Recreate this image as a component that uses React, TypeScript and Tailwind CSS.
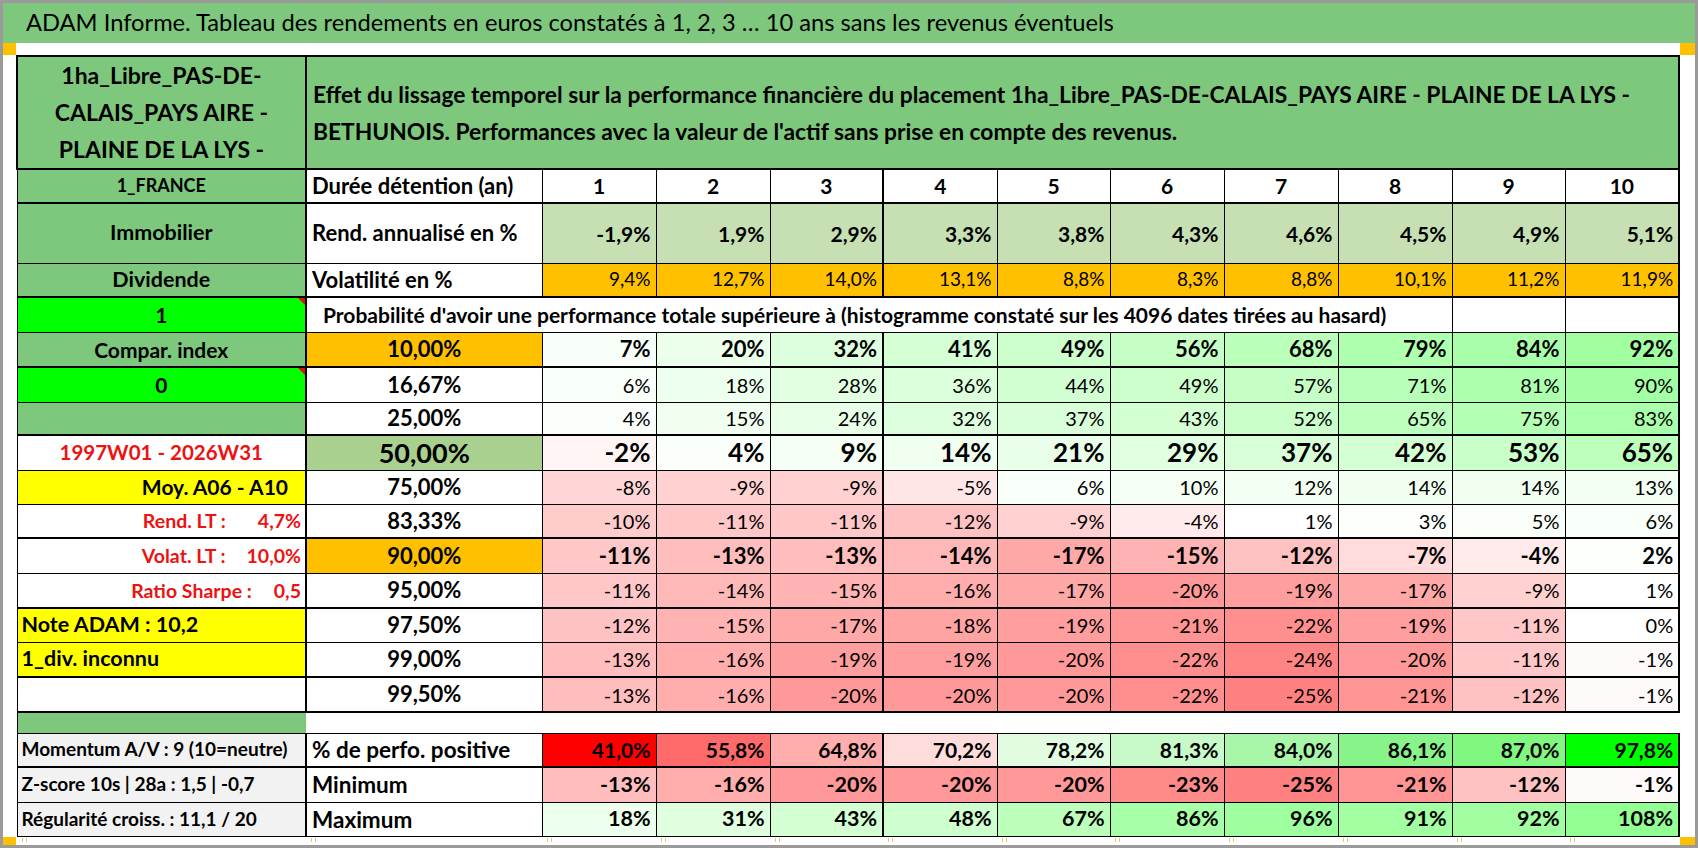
import React from 'react';

const colW = ['w-[114px]', 'w-[114px]', 'w-[113px]', 'w-[114px]', 'w-[113px]', 'w-[114px]', 'w-[114px]', 'w-[114px]', 'w-[113px]', 'w-[114px]'];

const rend = ['-1,9%', '1,9%', '2,9%', '3,3%', '3,8%', '4,3%', '4,6%', '4,5%', '4,9%', '5,1%'];
const vol = ['9,4%', '12,7%', '14,0%', '13,1%', '8,8%', '8,3%', '8,8%', '10,1%', '11,2%', '11,9%'];

const momentum = ['41,0%', '55,8%', '64,8%', '70,2%', '78,2%', '81,3%', '84,0%', '86,1%', '87,0%', '97,8%'];
const momentumBg = ['#ff0000', '#ff6b6b', '#ffadad', '#ffdcdc', '#e2fce2', '#c8f9c8', '#a8f6a8', '#88f388', '#80f880', '#00ff00'];
const minimum = [-13, -16, -20, -20, -20, -23, -25, -21, -12, -1];
const maximum = [18, 31, 43, 48, 67, 86, 96, 91, 92, 108];

// colour scale of the conditional formatting: white -> red below 0, white -> green above
function scaleBg(v: number) {
    if (v < 0) {
        const g = Math.round(255 * (1 - Math.min(1, -v / 50)));
        return `rgb(255,${g},${g})`;
    }
    const r = Math.round(255 * (1 - Math.min(1, v / 250)));
    return `rgb(${r},255,${r})`;
}

const GREEN = 'bg-[#7ec87e]';

function valCls(i: number, extra = '') {
    return `border border-black text-right pr-[5px] ${i === 2 ? 'border-r-2' : ''} ${i === 9 ? 'border-r-2' : ''} ${extra}`;
}

function Flag() {
    return <span className="absolute right-0 top-0 w-0 h-0 border-l-[7px] border-l-transparent border-t-[7px] border-t-[#e01010]" />;
}

function RedPair({ label, value, gap }: { label: string; value: string; gap: string }) {
    return (
        <div className="flex justify-end pr-[4px] text-[#ee1111] font-bold text-[19.5px]">
            <span>{label}</span>
            <span className={gap}>{value}</span>
        </div>
    );
}

type ProbRow = {
    label: string;
    vals: number[];
    kind: 'plain' | 'bold' | 'big';
    labelBg: string;
    left: React.ReactNode;
    leftCls: string;
    h: string;
    thick?: boolean;
};

const probRows: ProbRow[] = [
    { label: '10,00%', vals: [7, 20, 32, 41, 49, 56, 68, 79, 84, 92], kind: 'bold', labelBg: 'bg-[#ffc000]', left: 'Compar. index', leftCls: `${GREEN} text-center text-[21px]`, h: 'h-[35px]', thick: true },
    { label: '16,67%', vals: [6, 18, 28, 36, 44, 49, 57, 71, 81, 90], kind: 'plain', labelBg: 'bg-white', left: <>0<Flag /></>, leftCls: 'bg-[#00ff00] text-center text-[21px] relative', h: 'h-[35px]' },
    { label: '25,00%', vals: [4, 15, 24, 32, 37, 43, 52, 65, 75, 83], kind: 'plain', labelBg: 'bg-white', left: '', leftCls: GREEN, h: 'h-[33px]', thick: true },
    { label: '50,00%', vals: [-2, 4, 9, 14, 21, 29, 37, 42, 53, 65], kind: 'big', labelBg: 'bg-[#a9d08e]', left: '1997W01 - 2026W31', leftCls: 'bg-white text-center text-[#ee1111] text-[20.5px]', h: 'h-[35px]' },
    { label: '75,00%', vals: [-8, -9, -9, -5, 6, 10, 12, 14, 14, 13], kind: 'plain', labelBg: 'bg-white', left: 'Moy. A06 - A10', leftCls: 'bg-[#ffff00] text-right pr-[17px] text-[21px]', h: 'h-[34px]' },
    { label: '83,33%', vals: [-10, -11, -11, -12, -9, -4, 1, 3, 5, 6], kind: 'plain', labelBg: 'bg-white', left: <RedPair label="Rend. LT :" value="4,7%" gap="ml-[32px]" />, leftCls: 'bg-white', h: 'h-[34px]', thick: true },
    { label: '90,00%', vals: [-11, -13, -13, -14, -17, -15, -12, -7, -4, 2], kind: 'bold', labelBg: 'bg-[#ffc000]', left: <RedPair label="Volat. LT :" value="10,0%" gap="ml-[21px]" />, leftCls: 'bg-white', h: 'h-[35px]' },
    { label: '95,00%', vals: [-11, -14, -15, -16, -17, -20, -19, -17, -9, 1], kind: 'plain', labelBg: 'bg-white', left: <RedPair label="Ratio Sharpe :" value="0,5" gap="ml-[22px]" />, leftCls: 'bg-white', h: 'h-[35px]', thick: true },
    { label: '97,50%', vals: [-12, -15, -17, -18, -19, -21, -22, -19, -11, 0], kind: 'plain', labelBg: 'bg-white', left: 'Note ADAM : 10,2', leftCls: 'bg-[#ffff00] text-left pl-[4px] text-[21.5px]', h: 'h-[34px]' },
    { label: '99,00%', vals: [-13, -16, -19, -19, -20, -22, -24, -20, -11, -1], kind: 'plain', labelBg: 'bg-white', left: '1_div. inconnu', leftCls: 'bg-[#ffff00] text-left pl-[4px] text-[21.5px]', h: 'h-[35px]', thick: true },
    { label: '99,50%', vals: [-13, -16, -20, -20, -20, -22, -25, -21, -12, -1], kind: 'plain', labelBg: 'bg-white', left: '', leftCls: 'bg-white', h: 'h-[35px]', thick: true },
];

const kindCls = {
    plain: 'text-[20px] font-normal',
    bold: 'text-[22px] font-bold',
    big: 'text-[26px] font-bold',
};

// page-break ticks Excel leaves under the sheet
const tickCols = ['w-[289px]', 'w-[236px]', ...colW];

export default function App() {
    return (
        <div className="w-[1698px] h-[848px] overflow-hidden bg-white border-[3px] border-[#9a9a9a] [font-family:Lato,sans-serif] text-black flex flex-col">
            {/* Title band */}
            <div className={`h-[40px] shrink-0 ${GREEN} flex items-center pl-[23px] text-[23.7px]`}>
                ADAM Informe. Tableau des rendements en euros constatés à 1, 2, 3 … 10 ans sans les revenus éventuels
            </div>
            <div className="h-[12px] shrink-0 flex justify-between">
                <div className="w-[13px] bg-[#ffc000]" />
                <div className="w-[15px] bg-[#ffc000]" />
            </div>

            {/* Sheet */}
            <div className="pl-[13px] shrink-0">
                <table className="border-collapse table-fixed w-[1662px] leading-[1.2] whitespace-nowrap">
                    <colgroup>
                        <col className="w-[289px]" />
                        <col className="w-[236px]" />
                        {colW.map((w, i) => (
                            <col key={i} className={w} />
                        ))}
                    </colgroup>
                    <tbody>
                        <tr>
                            <td className={`${GREEN} border-2 border-black h-[113px] text-center font-bold text-[23px] leading-[37px]`}>
                                1ha_Libre_PAS-DE-
                                <br />
                                CALAIS_PAYS AIRE -
                                <br />
                                PLAINE DE LA LYS -
                            </td>
                            <td colSpan={11} className={`${GREEN} border-2 border-black pl-[6px] font-bold text-[22.8px] leading-[37px]`}>
                                Effet du lissage temporel sur la performance financière du placement 1ha_Libre_PAS-DE-CALAIS_PAYS AIRE - PLAINE DE LA LYS -
                                <br />
                                BETHUNOIS. Performances avec la valeur de l'actif sans prise en compte des revenus.
                            </td>
                        </tr>
                        <tr>
                            <td className={`${GREEN} border border-b-2 border-r-2 border-black h-[34px] text-center font-bold text-[18px]`}>1_FRANCE</td>
                            <td className="border border-b-2 border-black pl-[5px] font-bold text-[22px]">Durée détention (an)</td>
                            {colW.map((_, i) => (
                                <td key={i} className={valCls(i, 'border-b-2 !text-center !pr-0 font-bold text-[21px]')}>
                                    {i + 1}
                                </td>
                            ))}
                        </tr>
                        <tr>
                            <td className={`${GREEN} border border-r-2 border-black h-[60px] text-center font-bold text-[21.5px]`}>Immobilier</td>
                            <td className="border border-black pl-[5px] font-bold text-[22px]">Rend. annualisé en %</td>
                            {rend.map((v, i) => (
                                <td key={i} className={valCls(i, 'bg-[#c6e0b4] font-bold text-[21px]')}>
                                    {v}
                                </td>
                            ))}
                        </tr>
                        <tr>
                            <td className={`${GREEN} border border-b-2 border-r-2 border-black h-[34px] text-center font-bold text-[21.5px]`}>Dividende</td>
                            <td className="border border-b-2 border-black pl-[5px] font-bold text-[22px]">Volatilité en %</td>
                            {vol.map((v, i) => (
                                <td key={i} className={valCls(i, 'border-b-2 bg-[#ffc000] text-[19px]')}>
                                    {v}
                                </td>
                            ))}
                        </tr>
                        <tr>
                            <td className="relative bg-[#00ff00] border border-r-2 border-black h-[35px] text-center font-bold text-[21px]">
                                1
                                <Flag />
                            </td>
                            <td colSpan={9} className="border border-black pl-[16px] font-bold text-[21px]">
                                Probabilité d'avoir une performance totale supérieure à (histogramme constaté sur les 4096 dates tirées au hasard)
                            </td>
                            <td className="border border-black" />
                            <td className="border border-r-2 border-black" />
                        </tr>
                        {probRows.map((row) => (
                            <tr key={row.label}>
                                <td className={`border border-r-2 border-black ${row.h} font-bold ${row.thick ? 'border-b-2' : ''} ${row.leftCls}`}>{row.left}</td>
                                <td
                                    className={`border border-black text-center font-bold ${row.kind === 'big' ? 'text-[27px]' : 'text-[22px]'} ${row.thick ? 'border-b-2' : ''} ${row.labelBg}`}
                                >
                                    {row.label}
                                </td>
                                {row.vals.map((v, i) => (
                                    <td key={i} style={{ background: scaleBg(v) }} className={valCls(i, `${row.thick ? 'border-b-2' : ''} ${kindCls[row.kind]}`)}>
                                        {v}%
                                    </td>
                                ))}
                            </tr>
                        ))}
                        <tr>
                            <td className={`${GREEN} h-[21px] border-l border-black`} />
                            <td colSpan={11} />
                        </tr>
                        <tr>
                            <td className="bg-[#f2f2f2] border border-b-2 border-r-2 border-black h-[34px] pl-[4px] font-bold text-[19px]">Momentum A/V : 9 (10=neutre)</td>
                            <td className="border border-b-2 border-black pl-[5px] font-bold text-[22.5px]">% de perfo. positive</td>
                            {momentum.map((v, i) => (
                                <td key={i} style={{ background: momentumBg[i] }} className={valCls(i, 'border-b-2 font-bold text-[21px]')}>
                                    {v}
                                </td>
                            ))}
                        </tr>
                        <tr>
                            <td className="bg-[#f2f2f2] border border-r-2 border-black h-[35px] pl-[4px] font-bold text-[19px]">Z-score 10s | 28a : 1,5 | -0,7</td>
                            <td className="border border-black pl-[5px] font-bold text-[22.5px]">Minimum</td>
                            {minimum.map((v, i) => (
                                <td key={i} style={{ background: scaleBg(v) }} className={valCls(i, 'font-bold text-[21.5px]')}>
                                    {v}%
                                </td>
                            ))}
                        </tr>
                        <tr>
                            <td className="bg-[#f2f2f2] border border-r-2 border-black h-[34px] pl-[4px] font-bold text-[19px]">Régularité croiss. : 11,1 / 20</td>
                            <td className="border border-black pl-[5px] font-bold text-[22.5px]">Maximum</td>
                            {maximum.map((v, i) => (
                                <td key={i} style={{ background: scaleBg(v) }} className={valCls(i, 'font-bold text-[21.5px]')}>
                                    {v}%
                                </td>
                            ))}
                        </tr>
                    </tbody>
                </table>
            </div>

            {/* Bottom edge */}
            <div className="flex-1 flex">
                <div className="w-[13px] bg-[#ffc000]" />
                <div className="flex">
                    {tickCols.map((w, i) => (
                        <div key={i} className={`${w} pl-[6px] pt-[1px]`}>
                            <div className="w-[5px] h-[4px] border-x border-[#e6c878]" />
                        </div>
                    ))}
                </div>
                <div className="flex-1" />
                <div className="w-[15px] bg-[#ffc000]" />
            </div>
        </div>
    );
}
